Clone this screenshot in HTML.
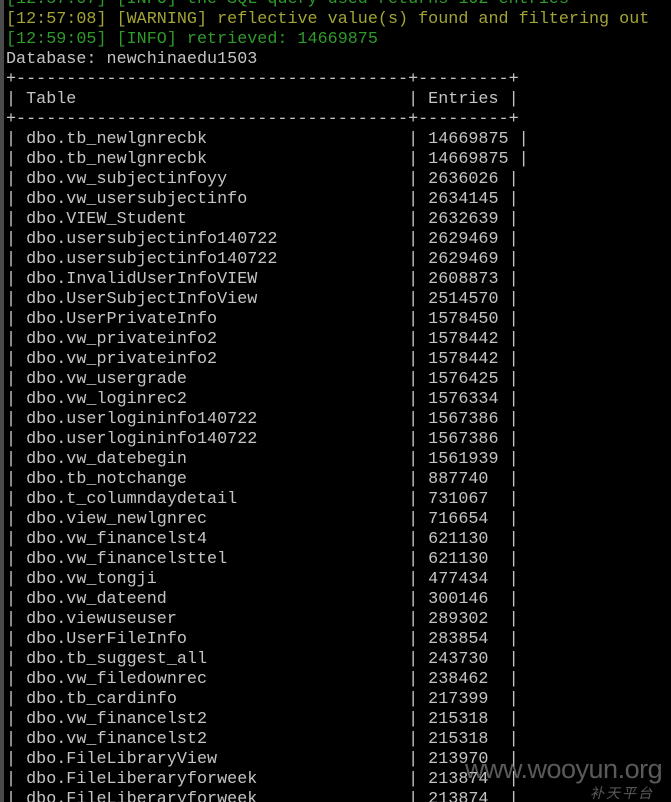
<!DOCTYPE html>
<html><head><meta charset="utf-8"><style>
html,body{margin:0;padding:0;background:#000;width:671px;height:802px;overflow:hidden;position:relative}
.strip{position:absolute;left:0;top:0;width:4px;height:802px;background:#4a4a4a}
pre{position:absolute;left:6px;top:-10px;margin:0;font-family:"Liberation Mono",monospace;font-size:16.75px;line-height:20px;color:#c4c4c4;white-space:pre}
.g{color:#2f9a2a}.y{color:#a3a336}
.wm{position:absolute;left:465px;top:754px;font-family:"Liberation Sans",sans-serif;font-size:27px;color:rgba(150,150,150,0.6);letter-spacing:-0.5px}
.wm2{position:absolute;left:590px;top:783px;font-family:"Liberation Sans","Noto Sans CJK SC",sans-serif;font-size:14px;font-style:italic;color:rgba(150,150,150,0.6);letter-spacing:2px}
</style></head><body><div class="strip"></div><pre><span class="g">[12:57:07] [INFO] the SQL query used returns 102 entries</span>
<span class="y">[12:57:08] [WARNING] reflective value(s) found and filtering out</span>
<span class="g">[12:59:05] [INFO] retrieved: 14669875</span>
Database: newchinaedu1503
+---------------------------------------+---------+
| Table                                 | Entries |
+---------------------------------------+---------+
| dbo.tb_newlgnrecbk                    | 14669875 |
| dbo.tb_newlgnrecbk                    | 14669875 |
| dbo.vw_subjectinfoyy                  | 2636026 |
| dbo.vw_usersubjectinfo                | 2634145 |
| dbo.VIEW_Student                      | 2632639 |
| dbo.usersubjectinfo140722             | 2629469 |
| dbo.usersubjectinfo140722             | 2629469 |
| dbo.InvalidUserInfoVIEW               | 2608873 |
| dbo.UserSubjectInfoView               | 2514570 |
| dbo.UserPrivateInfo                   | 1578450 |
| dbo.vw_privateinfo2                   | 1578442 |
| dbo.vw_privateinfo2                   | 1578442 |
| dbo.vw_usergrade                      | 1576425 |
| dbo.vw_loginrec2                      | 1576334 |
| dbo.userlogininfo140722               | 1567386 |
| dbo.userlogininfo140722               | 1567386 |
| dbo.vw_datebegin                      | 1561939 |
| dbo.tb_notchange                      | 887740  |
| dbo.t_columndaydetail                 | 731067  |
| dbo.view_newlgnrec                    | 716654  |
| dbo.vw_financelst4                    | 621130  |
| dbo.vw_financelsttel                  | 621130  |
| dbo.vw_tongji                         | 477434  |
| dbo.vw_dateend                        | 300146  |
| dbo.viewuseuser                       | 289302  |
| dbo.UserFileInfo                      | 283854  |
| dbo.tb_suggest_all                    | 243730  |
| dbo.vw_filedownrec                    | 238462  |
| dbo.tb_cardinfo                       | 217399  |
| dbo.vw_financelst2                    | 215318  |
| dbo.vw_financelst2                    | 215318  |
| dbo.FileLibraryView                   | 213970  |
| dbo.FileLiberaryforweek               | 213874  |
| dbo.FileLiberaryforweek               | 213874  |</pre>
<div class="wm">www.wooyun.org</div><div class="wm2">补天平台</div>
</body></html>
